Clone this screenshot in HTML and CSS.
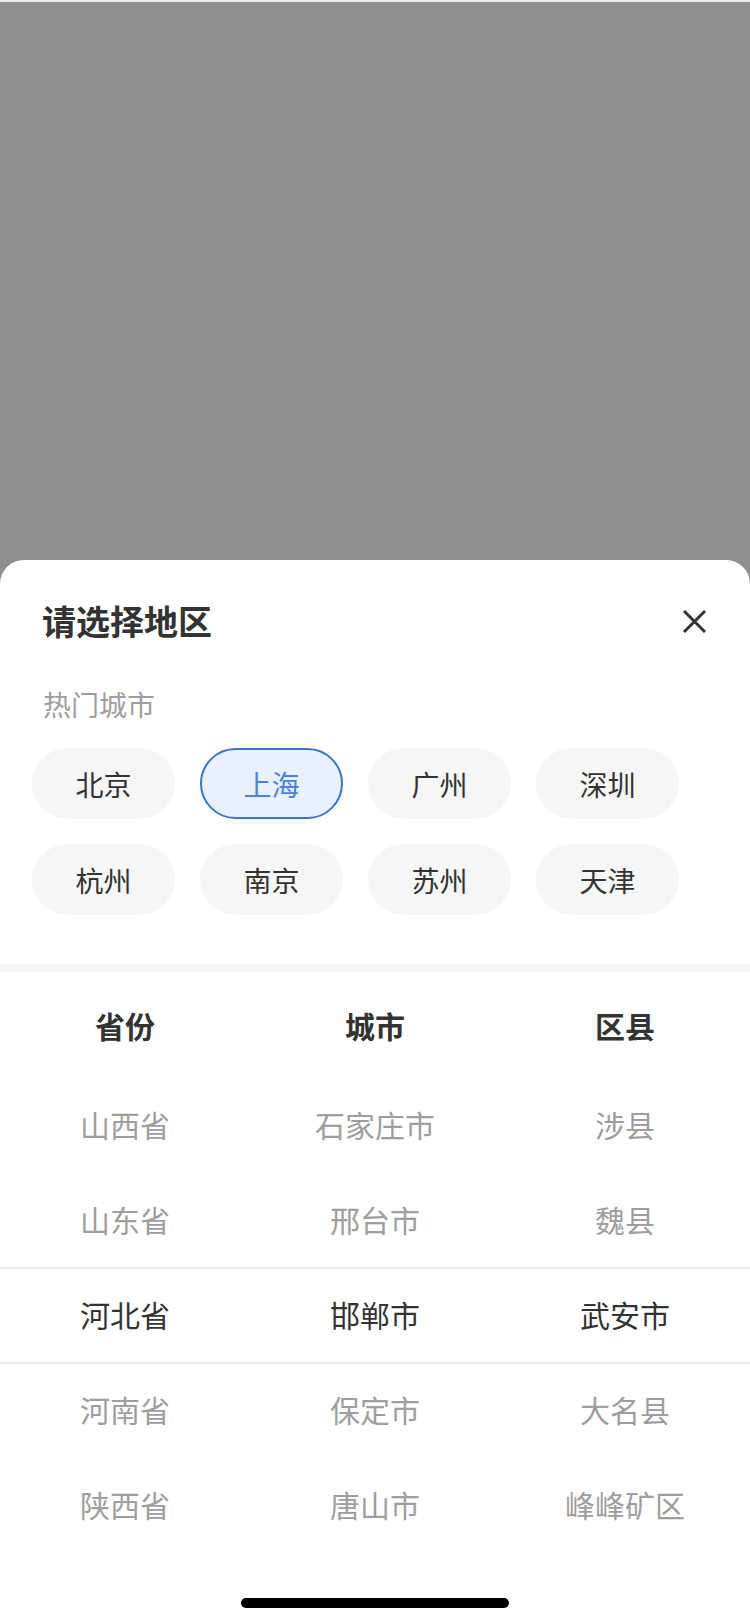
FILE: index.html
```html
<!DOCTYPE html>
<html lang="zh-CN">
<head>
    <meta charset="UTF-8">
    <meta name="viewport" content="width=device-width, initial-scale=1.0">
    <title>选择地区</title>
    <link rel="stylesheet" href="styles.css">
</head>
<body>
    <div class="mask"></div>
    <div class="sheet">
        <div class="sheet-head">
            <div class="sheet-title">请选择地区</div>
            <svg class="close" width="25" height="25" viewBox="0 0 25 25">
                <path d="M2 2 L23 23 M23 2 L2 23" stroke="#333" stroke-width="3" fill="none"/>
            </svg>
        </div>

        <div class="hot-title">热门城市</div>
        <div class="chips">
            <div class="chip">北京</div>
            <div class="chip active">上海</div>
            <div class="chip">广州</div>
            <div class="chip">深圳</div>
            <div class="chip">杭州</div>
            <div class="chip">南京</div>
            <div class="chip">苏州</div>
            <div class="chip">天津</div>
        </div>

        <div class="band"></div>

        <div class="col-heads">
            <div>省份</div>
            <div>城市</div>
            <div>区县</div>
        </div>

        <div class="picker">
            <div class="picker-col">
                <div class="item">山西省</div>
                <div class="item">山东省</div>
                <div class="item current">河北省</div>
                <div class="item">河南省</div>
                <div class="item">陕西省</div>
            </div>
            <div class="picker-col">
                <div class="item">石家庄市</div>
                <div class="item">邢台市</div>
                <div class="item current">邯郸市</div>
                <div class="item">保定市</div>
                <div class="item">唐山市</div>
            </div>
            <div class="picker-col">
                <div class="item">涉县</div>
                <div class="item">魏县</div>
                <div class="item current">武安市</div>
                <div class="item">大名县</div>
                <div class="item">峰峰矿区</div>
            </div>
            <!-- lines round the selected row -->
            <div class="picker-mark"></div>
        </div>

        <div class="home-bar"></div>
    </div>
</body>
</html>
```

FILE: styles.css
```css
body {
    margin: 0;
    height: 1624px;
    display: flex;
    flex-direction: column;
    font-family: "Noto Sans CJK SC", "Noto Sans", sans-serif;
    background: #fff;
    color: #333;
}

.mask {
    flex: 1;
    background: #8f8f8f;
    border-top: 2px solid #ececec;
}

.sheet {
    background: #fff;
    border-radius: 24px 24px 0 0;
    margin-top: -24px;
    padding-top: 24px;
}

.sheet-head {
    display: flex;
    justify-content: space-between;
    align-items: center;
    height: 48px;
    padding: 13px 43px 0 42px;
}

.sheet-title {
    font-size: 34px;
    font-weight: 600;
    line-height: 48px;
    color: #333;
}

.close {
    display: block;
}

.hot-title {
    margin-top: 39px;
    padding-left: 43px;
    font-size: 28px;
    line-height: 40px;
    color: #9e9e9e;
}

.chips {
    display: grid;
    grid-template-columns: repeat(4, 143px);
    grid-auto-rows: 71px;
    gap: 25px 25px;
    padding: 24px 32px 49px;
}

.chip {
    display: flex;
    align-items: center;
    justify-content: center;
    box-sizing: border-box;
    border-radius: 36px;
    background: #f6f6f6;
    font-size: 28px;
    color: #333;
}

.chip.active {
    background: #e8f1fe;
    border: 2px solid #3a74cc;
    color: #4a82e2;
}

.band {
    height: 8px;
    background: #f5f5f5;
}

.col-heads {
    display: grid;
    grid-template-columns: repeat(3, 1fr);
    height: 106px;
    align-items: center;
    text-align: center;
    font-size: 30px;
    font-weight: 600;
    color: #333;
}

.picker {
    position: relative;
    display: grid;
    grid-template-columns: repeat(3, 1fr);
}

.item {
    height: 95px;
    box-sizing: border-box;
    padding-bottom: 4px;
    display: flex;
    align-items: center;
    justify-content: center;
    font-size: 30px;
    color: #9e9e9e;
}

.item.current {
    color: #333;
}

.picker-mark {
    position: absolute;
    left: 0;
    right: 0;
    top: 189px;
    height: 93px;
    border-top: 2px solid #ececec;
    border-bottom: 2px solid #ececec;
    pointer-events: none;
}

.home-bar {
    width: 268px;
    height: 10px;
    margin: 45px auto 16px;
    border-radius: 5px;
    background: #000;
}
```
